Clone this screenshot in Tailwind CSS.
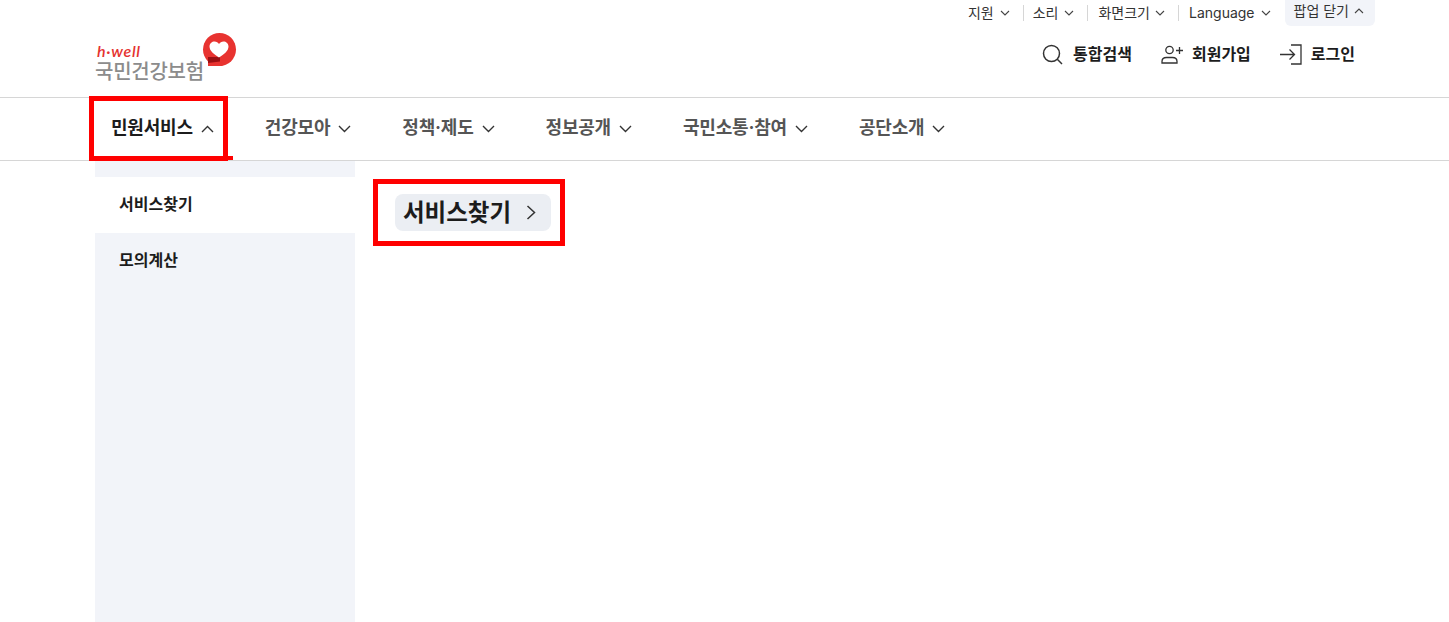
<!doctype html>
<html lang="ko">
<head>
<meta charset="utf-8">
<title>국민건강보험</title>
<script src="https://cdn.jsdelivr.net/npm/@tailwindcss/browser@4"></script>
</head>
<body class="relative h-[622px] overflow-hidden bg-white text-[#1c1c1c] font-['Inter','Noto_Sans_CJK_KR',sans-serif]">

<header class="h-[98px] border-b border-[#d6d6d6] pl-[95px] pr-[74px] flex justify-between">
  <a class="relative mt-[33px] w-[142px] h-[50px] block">
    <span class="absolute left-[2px] top-[10px] text-[16px] leading-[15px] tracking-[0.7px] font-semibold italic text-[#e5322f] font-['Lato',sans-serif]">h·well</span>
    <span class="absolute left-0 top-[25px] text-[20px] leading-[26px] tracking-[-0.25px] font-medium text-[#8c8c8c] font-['Noto_Sans_CJK_KR',sans-serif]">국민건강보험</span>
    <svg class="absolute left-[107px] top-0" width="35" height="35" viewBox="0 0 35 35">
      <circle cx="17.500" cy="16.500" r="16.500" fill="#e83330"/>
      <path d="M6 24 L6 33 L20 33 L24 28 Z" fill="#e83330"/>
      <path d="M6 24 L6 30 L18 28.500 L18 24 Z" fill="#9c0f12"/>
      <path d="M17 24.500 C12 21 7.500 18 7.500 13.500 C7.500 10.500 10 8.500 12.500 8.500 C14.500 8.500 16 9.500 17 11 C18 9.500 19.500 8.500 21.500 8.500 C24 8.500 26.500 10.500 26.500 13.500 C26.500 18 22 21 17 24.500 Z" fill="#fff"/>
    </svg>
  </a>

  <div class="flex flex-col items-end">
    <ul class="flex items-center h-[26px] text-[14px] leading-[20px] text-[#333]">
      <li class="flex items-center gap-[6px] pr-[13px]">지원
        <svg width="10" height="6" viewBox="0 0 10 6" fill="none" stroke="#444" stroke-width="1.100"><path d="M1 1 5 5 9 1"/></svg>
      </li>
      <li class="flex items-center gap-[6px] pl-[9px] pr-[13px] border-l border-[#d6d6d6] h-[16px]">소리
        <svg width="10" height="6" viewBox="0 0 10 6" fill="none" stroke="#444" stroke-width="1.100"><path d="M1 1 5 5 9 1"/></svg>
      </li>
      <li class="flex items-center gap-[5px] pl-[10px] pr-[13px] border-l border-[#d6d6d6] h-[16px]">화면크기
        <svg width="10" height="6" viewBox="0 0 10 6" fill="none" stroke="#444" stroke-width="1.100"><path d="M1 1 5 5 9 1"/></svg>
      </li>
      <li class="flex items-center gap-[6px] pl-[10px] pr-[14px] border-l border-[#d6d6d6] h-[16px]">Language
        <svg width="10" height="6" viewBox="0 0 10 6" fill="none" stroke="#444" stroke-width="1.100"><path d="M1 1 5 5 9 1"/></svg>
      </li>
      <li class="flex items-start gap-[5px] h-[26px] pl-[9px] pr-[11px] pt-[1px] rounded-b-[6px] bg-[#f2f4f9]">팝업 닫기
        <svg class="mt-[7px]" width="10" height="6" viewBox="0 0 10 6" fill="none" stroke="#444" stroke-width="1.100"><path d="M1 5 5 1 9 5"/></svg>
      </li>
    </ul>
    <ul class="flex items-center gap-[29px] mt-[5px] mr-[20px] h-[46px] text-[16px] font-bold text-[#1c1c1c]">
      <li class="flex items-center gap-[10px]">
        <svg width="21" height="21" viewBox="0 0 21 21" fill="none" stroke="#333" stroke-width="1.500"><circle cx="9.500" cy="9.500" r="8"/><path d="M15.300 15.300 20 20"/></svg>
        통합검색
      </li>
      <li class="flex items-center gap-[9px]">
        <svg width="22" height="19" viewBox="0 0 22 19" fill="none" stroke="#333" stroke-width="1.300"><circle cx="8.500" cy="5" r="3.700"/><path d="M1 18v-1.500c0-2.500 2-4 4.500-4h6c2.500 0 4.500 1.500 4.500 4V18Z"/><path d="M15 5.500h7M18.500 2v7"/></svg>
        회원가입
      </li>
      <li class="flex items-center gap-[9px]">
        <svg width="22" height="21" viewBox="0 0 22 21" fill="none" stroke="#333" stroke-width="1.300"><path d="M0 10.500h14M9.500 5.500l5 5-5 5"/><path d="M11 1h10v19H11"/></svg>
        로그인
      </li>
    </ul>
  </div>
</header>

<nav class="h-[63px] border-b border-[#d6d6d6] pl-[111px] pb-[3px] flex items-center gap-[51px] text-[18px] tracking-[-0.2px] font-bold text-[#555]">
  <a class="flex items-center gap-[8px] text-[#1c1c1c]">민원서비스
    <svg class="mt-[3px]" width="13" height="8" viewBox="0 0 13 8" fill="none" stroke="#333" stroke-width="1.400"><path d="M1 7 6.500 1.500 12 7"/></svg>
  </a>
  <a class="flex items-center gap-[8px]">건강모아
    <svg class="mt-[3px]" width="13" height="8" viewBox="0 0 13 8" fill="none" stroke="#333" stroke-width="1.400"><path d="M1 1 6.500 6.500 12 1"/></svg>
  </a>
  <a class="flex items-center gap-[8px]">정책·제도
    <svg class="mt-[3px]" width="13" height="8" viewBox="0 0 13 8" fill="none" stroke="#333" stroke-width="1.400"><path d="M1 1 6.500 6.500 12 1"/></svg>
  </a>
  <a class="flex items-center gap-[8px]">정보공개
    <svg class="mt-[3px]" width="13" height="8" viewBox="0 0 13 8" fill="none" stroke="#333" stroke-width="1.400"><path d="M1 1 6.500 6.500 12 1"/></svg>
  </a>
  <a class="flex items-center gap-[8px]">국민소통·참여
    <svg class="mt-[3px]" width="13" height="8" viewBox="0 0 13 8" fill="none" stroke="#333" stroke-width="1.400"><path d="M1 1 6.500 6.500 12 1"/></svg>
  </a>
  <a class="flex items-center gap-[8px]">공단소개
    <svg class="mt-[3px]" width="13" height="8" viewBox="0 0 13 8" fill="none" stroke="#333" stroke-width="1.400"><path d="M1 1 6.500 6.500 12 1"/></svg>
  </a>
</nav>

<main class="flex pl-[95px]">
  <aside class="w-[260px] h-[461px] bg-[#f2f4f9] pt-[16px] text-[16px] font-bold text-[#1c1c1c]">
    <div class="h-[56px] bg-white pl-[24px] pb-[2px] flex items-center">서비스찾기</div>
    <div class="h-[56px] pl-[24px] pb-[2px] flex items-center">모의계산</div>
  </aside>
  <section class="pl-[40px] pt-[33px]">
    <a class="inline-flex items-center gap-[15px] h-[37px] pl-[8px] pr-[14px] rounded-[8px] bg-[#ebeef3] text-[23.500px] font-bold text-[#1c1c1c]">서비스찾기
      <svg width="11" height="15" viewBox="0 0 11 15" fill="none" stroke="#333" stroke-width="1.500"><path d="M1.500 1 8.500 7.500 1.500 14"/></svg>
    </a>
  </section>
</main>

<div class="absolute left-[89px] top-[96px] w-[139px] h-[65px] border-[5px] border-[#ff0000]"></div>
<div class="absolute left-[228px] top-[156px] w-[5px] h-[4px] bg-[#ff0000]"></div>
<div class="absolute left-[373px] top-[179px] w-[192px] h-[67px] border-[5px] border-[#ff0000]"></div>
</body>
</html>
